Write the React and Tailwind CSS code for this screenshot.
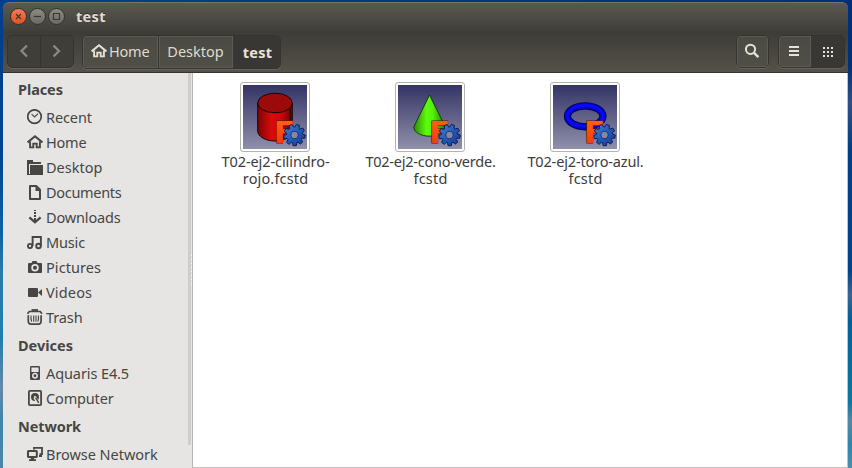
import React from "react";

const INK = "#474643";

function Icon({ children, className = "" }) {
  return (
    <svg width="16" height="16" viewBox="0 0 16 16" fill="none" className={"shrink-0 " + className}>
      {children}
    </svg>
  );
}

function HomeGlyph({ color }) {
  return (
    <>
      <path d="M0.6 8.4 8 2.2l7.4 6.2" stroke={color} strokeWidth="2" />
      <path d="M3.1 7.5v5.9h3.2V9.6h3.4v3.8h3.2V7.5" stroke={color} strokeWidth="1.9" />
    </>
  );
}

const icons = {
  recent: (
    <>
      <circle cx="7.5" cy="7.6" r="6.8" stroke={INK} strokeWidth="1.7" />
      <path d="M4.6 5.2 7.6 8l3.4-3.4" stroke={INK} strokeWidth="1.1" />
    </>
  ),
  home: <HomeGlyph color={INK} />,
  desktop: (
    <>
      <path d="M0 1h6v2h8v2H3v1H2v10H0z" fill={INK} />
      <path d="M3 6h13v10H3z" fill={INK} />
      <path d="M2 16V5h12v1H3v10z" fill="#e6e5e3" />
      <path d="M0 15h16v1H0z" fill={INK} />
    </>
  ),
  documents: (
    <>
      <path d="M3 2h6.2L13 5.8V15H3z" stroke={INK} strokeWidth="2" strokeLinejoin="round" />
      <path d="M8.5 2v5H13z" fill={INK} />
    </>
  ),
  downloads: (
    <>
      <path d="M7 1h2v1H7zM7 3h2v2H7zM7 6h2v2H7zM7 9h2v4H7z" fill={INK} />
      <path d="M2.4 8.4 8 13.4l5.6-5" stroke={INK} strokeWidth="2.2" />
    </>
  ),
  music: (
    <>
      <circle cx="3" cy="12" r="2.1" stroke={INK} strokeWidth="1.9" />
      <circle cx="11.5" cy="12" r="2.3" stroke={INK} strokeWidth="1.9" />
      <path d="M5.6 12V3h8.3v9" stroke={INK} strokeWidth="1.9" />
    </>
  ),
  pictures: (
    <>
      <path d="M2 4h2.5l1-2h4l1 2H14q1 0 1 1v8q0 1-1 1H2q-1 0-1-1V5q0-1 1-1z" fill={INK} />
      <circle cx="8" cy="8.8" r="2.9" stroke="#e6e5e3" strokeWidth="1.7" />
    </>
  ),
  videos: <path d="M2 4h8q1 0 1 1v7q0 1-1 1H2q-1 0-1-1V5q0-1 1-1zM11 8.4 15 5v7z" fill={INK} />,
  trash: (
    <>
      <path d="M0.5 4.8 2.3 2.5h10.9L15 4.8" stroke={INK} strokeWidth="1.7" />
      <path d="M4.5 1h6.5" stroke={INK} strokeWidth="1.8" />
      <path d="M1.3 6.2v6.1q0 2.8 2.8 2.8h7.2q2.8 0 2.8-2.8V6.2" stroke={INK} strokeWidth="1.7" />
      <path d="M4.1 6.5q-.5 3 .5 6.2M6.7 6.5v6.2M9 6.5v6.2M11.4 6.5q.5 3-.5 6.2" stroke={INK} strokeWidth="1.1" />
    </>
  ),
  player: (
    <>
      <path d="M4.2 1h7.6q1.2 0 1.2 1.2v11.6q0 1.2-1.2 1.2H4.2Q3 15 3 13.8V2.2Q3 1 4.2 1zM4.4 2.4V7h7.2V2.4z" fill={INK} fillRule="evenodd" />
      <circle cx="8" cy="10.8" r="2.2" stroke="#e6e5e3" strokeWidth="1.5" />
    </>
  ),
  drive: (
    <>
      <rect x="1.9" y="0.9" width="12.2" height="14.2" rx="1" stroke={INK} strokeWidth="1.8" />
      <circle cx="8" cy="7" r="4" fill={INK} />
      <circle cx="8" cy="7" r="1.1" fill="#e6e5e3" />
      <path d="m7.8 7.4 3 4.8" stroke="#e6e5e3" strokeWidth="3" />
      <path d="m8.6 7.6 3.2 5.2" stroke={INK} strokeWidth="1.4" />
    </>
  ),
  network: (
    <>
      <path d="M7 3.5V1.9h8v6.2h-2.5" stroke={INK} strokeWidth="1.8" />
      <path d="M12 9h3v2h-3z" fill={INK} />
      <rect x="1" y="4.9" width="8.8" height="6.2" rx="0.5" stroke={INK} strokeWidth="2" />
      <path d="M3.8 12h3.4v1.2H9V15H2v-1.8h1.8z" fill={INK} />
    </>
  ),
};

const sections = [
  {
    title: "Places",
    space: "tracking-[-0.1px]",
    items: [
      ["recent", "Recent", "tracking-[-0.1px]"],
      ["home", "Home", "tracking-[-0.2px]"],
      ["desktop", "Desktop", "tracking-[0px]"],
      ["documents", "Documents", "tracking-[-0.3px]"],
      ["downloads", "Downloads", "tracking-[-0.15px]"],
      ["music", "Music", "tracking-[-0.15px]"],
      ["pictures", "Pictures", "tracking-[0.06px]"],
      ["videos", "Videos", "tracking-[0.15px]"],
      ["trash", "Trash", "tracking-[-0.1px]"],
    ],
  },
  {
    title: "Devices",
    space: "tracking-[0px]",
    items: [
      ["player", "Aquaris E4.5", "tracking-[-0.1px]"],
      ["drive", "Computer", "tracking-[-0.15px]"],
    ],
  },
  {
    title: "Network",
    space: "tracking-[-0.1px]",
    items: [["network", "Browse Network", "tracking-[-0.04px]"]],
  },
];

function gearPath(cx, cy, outer, inner, teeth) {
  const pts = [];
  for (let i = 0; i < teeth; i++) {
    const a = (i / teeth) * Math.PI * 2 + 0.15;
    [[-0.27, inner], [-0.15, outer], [0.15, outer], [0.27, inner]].forEach(([d, r]) => {
      pts.push((cx + Math.cos(a + d) * r).toFixed(2) + " " + (cy + Math.sin(a + d) * r).toFixed(2));
    });
  }
  return "M" + pts.join("L") + "Z";
}

const GEAR = gearPath(51.5, 50, 10.8, 8, 9) + "M55 50a3.5 3.5 0 1 0-7 0a3.5 3.5 0 1 0 7 0Z";

function Thumb({ kind }) {
  return (
    <svg width="64" height="64" viewBox="0 0 64 64">
      <defs>
        <linearGradient id={kind + "bg"} x1="0" y1="0" x2="0" y2="1">
          <stop offset="0" stopColor="#343466" />
          <stop offset="1" stopColor="#9090ab" />
        </linearGradient>
        <linearGradient id={kind + "red"}>
          <stop offset="0" stopColor="#7d0505" />
          <stop offset="0.4" stopColor="#d90a0a" />
          <stop offset="0.65" stopColor="#d00808" />
          <stop offset="1" stopColor="#6f0404" />
        </linearGradient>
        <linearGradient id={kind + "green"}>
          <stop offset="0" stopColor="#2b8a06" />
          <stop offset="0.4" stopColor="#5dfb0c" />
          <stop offset="0.6" stopColor="#55f20a" />
          <stop offset="1" stopColor="#237204" />
        </linearGradient>
        <linearGradient id={kind + "f"} x1="0" y1="0" x2="0" y2="1">
          <stop offset="0" stopColor="#ff6a12" />
          <stop offset="1" stopColor="#f5300c" />
        </linearGradient>
        <linearGradient id={kind + "gear"} x1="0" y1="0" x2="1" y2="1">
          <stop offset="0" stopColor="#4a82d8" />
          <stop offset="0.5" stopColor="#2459b8" />
          <stop offset="1" stopColor="#12398e" />
        </linearGradient>
      </defs>
      <rect width="64" height="64" fill={`url(#${kind}bg)`} />
      {kind === "cylinder" && (
        <g stroke="#150508" strokeWidth="1">
          <path d="M14.7 18v28c0 5.5 7.8 10 17.3 10s17.3-4.5 17.3-10V18z" fill={`url(#${kind}red)`} />
          <ellipse cx="32" cy="18" rx="17.3" ry="9.8" fill="#9c0a0a" />
          <path d="M47.2 24v26" fill="none" />
        </g>
      )}
      {kind === "cone" && (
        <path d="M31.5 10 15.8 42c0 5 7 9.2 15.8 9.2s15.8-4.2 15.8-9.2z" fill={`url(#${kind}green)`} stroke="#18390b" strokeWidth="1" strokeLinejoin="round" />
      )}
      {kind === "torus" && (
        <>
          <ellipse cx="32.2" cy="31.3" rx="17.8" ry="10.5" fill="none" stroke="#02023c" strokeWidth="7.2" />
          <ellipse cx="32.2" cy="31.2" rx="17.8" ry="10.4" fill="none" stroke="#0505c8" strokeWidth="5.6" />
          <ellipse cx="32.2" cy="30.9" rx="17.8" ry="10.4" fill="none" stroke="#0808fa" strokeWidth="3" />
        </>
      )}
      <text x="31" y="58" fontFamily="DejaVu Sans, sans-serif" fontWeight="bold" fontSize="31" fill={`url(#${kind}f)`} stroke="#5a160e" strokeWidth="1" paintOrder="stroke">
        F
      </text>
      <path d={GEAR} fillRule="evenodd" fill={`url(#${kind}gear)`} stroke="#0a1d50" strokeWidth="1" strokeLinejoin="round" />
      <circle cx="51.5" cy="50" r="3.2" fill="#8687a4" />
    </svg>
  );
}

const files = [
  ["cylinder", ["T02-ej2-cilindro-", "tracking-[-0.08px]"], ["rojo.fcstd", "tracking-[0.15px]"]],
  ["cone", ["T02-ej2-cono-verde.", "tracking-[-0.23px]"], ["fcstd", "tracking-[0.2px]"]],
  ["torus", ["T02-ej2-toro-azul.", "tracking-[-0.15px]"], ["fcstd", "tracking-[0.2px]"]],
];

function WindowButton({ close, children }) {
  return (
    <span
      className={
        "flex size-[17px] items-center justify-center rounded-full border " +
        (close
          ? "border-[#34322d] bg-gradient-to-b from-[#f47b56] to-[#e2501f]"
          : "border-[#34322d] bg-gradient-to-b from-[#8d8b84] to-[#6b6963]")
      }
    >
      <svg width="15" height="15" viewBox="0 0 15 15" fill="none" stroke="#393731" strokeWidth="1.2" className="shrink-0">
        {children}
      </svg>
    </span>
  );
}

const group = "flex overflow-hidden rounded-[5px] border border-[#34332f] shadow-[0_1px_0_#67645b]";
const raised = "bg-gradient-to-b from-[#4a4943] to-[#504f47] shadow-[inset_0_0_0_1px_#5d5b53]";

export default function App() {
  return (
    <div className="h-[468px] w-[852px] overflow-hidden bg-[linear-gradient(to_bottom,#00307c_0%,#003078_14%,#2f4f86_22%,#003f88_32%,#00458c_58%,#3a6592_63%,#005f9c_68%,#0a78a0_86%,#5488a4_90%,#2b86ac_95%,#4b8fae_100%),linear-gradient(to_right,#003f8c,#00307c),linear-gradient(to_bottom,#003f8c_0%,#00448f_32%,#0a64a4_50%,#2b7ba8_58%,#1e7eae_72%,#6688a5_83%,#3d85ad_90%,#4b86a6_100%)] bg-[length:10px_100%,100%_10px,100%_100%] bg-[position:right_top,left_top,left_top] bg-no-repeat font-['Noto_Sans',sans-serif] text-[14.5px] text-[#474643]">
      <div className="flex h-full pr-[4px] pl-[3px] pt-[2px]">
        <div className="flex min-w-0 flex-1 flex-col">
          <header className="flex h-[29px] shrink-0 items-center rounded-t-[6px] border-t border-[#77746a] bg-gradient-to-b from-[#5b584f] to-[#413f3b] pb-px pl-[7px]">
            <div className="flex gap-[2px]">
              <WindowButton close>
                <path d="m5 5 5 5m0-5-5 5" />
              </WindowButton>
              <WindowButton>
                <path d="M4 7.5h7" />
              </WindowButton>
              <WindowButton>
                <path d="M4.5 4.5h6v6h-6z" />
              </WindowButton>
            </div>
            <span className="mb-px ml-[11px] font-bold leading-5 tracking-[0.3px] text-[#e0dcd1] [text-shadow:0_-1px_0_#2f2d29]">test</span>
          </header>

          <div className="flex h-[42px] shrink-0 items-start border-b border-[#34332e] bg-gradient-to-b from-[#3d3c38] to-[#545148] pt-[4px] pr-[3px] pl-[4px] text-[#dfdbd0]">
            <div className={group + " h-[33px] w-[67px] bg-[#3f3e39]"}>
              <span className="flex flex-1 items-center justify-center border-r border-[#34332f] pb-px">
                <svg width="12" height="14" viewBox="0 0 12 14" fill="none" stroke="#8e8b83" strokeWidth="2.2" className="-ml-px">
                  <path d="M9 1.5 3.5 7 9 12.5" />
                </svg>
              </span>
              <span className="flex flex-1 items-center justify-center pb-px">
                <svg width="12" height="14" viewBox="0 0 12 14" fill="none" stroke="#8e8b83" strokeWidth="2.2">
                  <path d="M2.5 1.5 8 7l-5.5 5.5" />
                </svg>
              </span>
            </div>
            <div className={group + " ml-[8px] h-[34px] w-[199px]"}>
              <span className={raised + " flex w-[76px] items-center border-r border-[#34332f] pl-[8px]"}>
                <Icon className="mb-[2px]">
                  <HomeGlyph color="#e5e1d6" />
                </Icon>
                <span className="ml-[2px] whitespace-nowrap tracking-[-0.2px]">Home</span>
              </span>
              <span className={raised + " flex w-[74px] items-center justify-center pr-px tracking-[0px]"}>Desktop</span>
              <span className="flex flex-1 items-center justify-center bg-[#383733] pt-px pl-[2px] font-bold tracking-[0.3px] text-[#e8e4da]">test</span>
            </div>
            <div className="flex-1" />
            <div className={group + " mr-[9px] h-[33px] w-[33px]"}>
              <span className={raised + " flex flex-1 items-center justify-center pr-px pb-px"}>
                <Icon>
                  <circle cx="6.5" cy="6.3" r="4.6" stroke="#e5e1d6" strokeWidth="2" />
                  <path d="m9.8 9.6 4.6 4.6" stroke="#e5e1d6" strokeWidth="2.4" />
                </Icon>
              </span>
            </div>
            <div className={group + " h-[33px] w-[67px]"}>
              <span className={raised + " flex w-[32px] items-center justify-center pr-[2px] pb-px"}>
                <Icon>
                  <path d="M3 3h10v2H3zM3 7h10v2H3zM3 11h10v2H3z" fill="#e5e1d6" />
                </Icon>
              </span>
              <span className="flex flex-1 items-center justify-center bg-[#383733] pt-px pl-px">
                <Icon>
                  <path
                    d="M3 3h2v2H3zM7 3h2v2H7zM11 3h2v2h-2zM3 7h2v2H3zM7 7h2v2H7zM11 7h2v2h-2zM3 11h2v2H3zM7 11h2v2H7zM11 11h2v2h-2z"
                    fill="#e5e1d6"
                  />
                </Icon>
              </span>
            </div>
          </div>

          <div className="flex min-h-0 flex-1">
            <nav className="flex w-[190px] shrink-0 justify-between overflow-hidden border-r border-[#b9b6b1] bg-[#e6e5e3]">
              <div className="pt-px">
                {sections.map((s) => (
                  <section key={s.title}>
                    <h2 className={"h-[31px] pl-[15px] font-bold leading-[31px] " + s.space}>{s.title}</h2>
                    {s.items.map(([icon, label, space]) => (
                      <div key={label} className="flex h-[25px] pl-[24px]">
                        <Icon className="mt-[4px]">{icons[icon]}</Icon>
                        <span className={"ml-[3px] whitespace-nowrap leading-[25px] " + space}>{label}</span>
                      </div>
                    ))}
                  </section>
                ))}
              </div>
              <div className="flex">
                <div className="h-[372px] w-[3px] bg-[#d0cecb]" />
                <div className="flex w-px flex-col gap-[3px] pt-[182px]">
                  {[0, 1, 2, 3, 4, 5, 6, 7].map((n) => (
                    <i key={n} className="h-px w-px bg-white" />
                  ))}
                </div>
              </div>
            </nav>
            <main className="flex flex-1 items-start border-r border-b border-[#c4c2bf] bg-white pt-[9px] pl-[4px]">
              {files.map(([kind, a, b]) => (
                <figure key={kind} className="flex w-[155px] flex-col items-center">
                  <div className="rounded-[3px] border border-[#b4b4ae] bg-white p-[2px]">
                    <Thumb kind={kind} />
                  </div>
                  <figcaption className="mt-px flex flex-col items-center whitespace-nowrap pl-[2px] leading-[17px] text-[#3c3c3c]">
                    <span className={a[1]}>{a[0]}</span>
                    <span className={b[1]}>{b[0]}</span>
                  </figcaption>
                </figure>
              ))}
            </main>
          </div>
        </div>
      </div>
    </div>
  );
}
